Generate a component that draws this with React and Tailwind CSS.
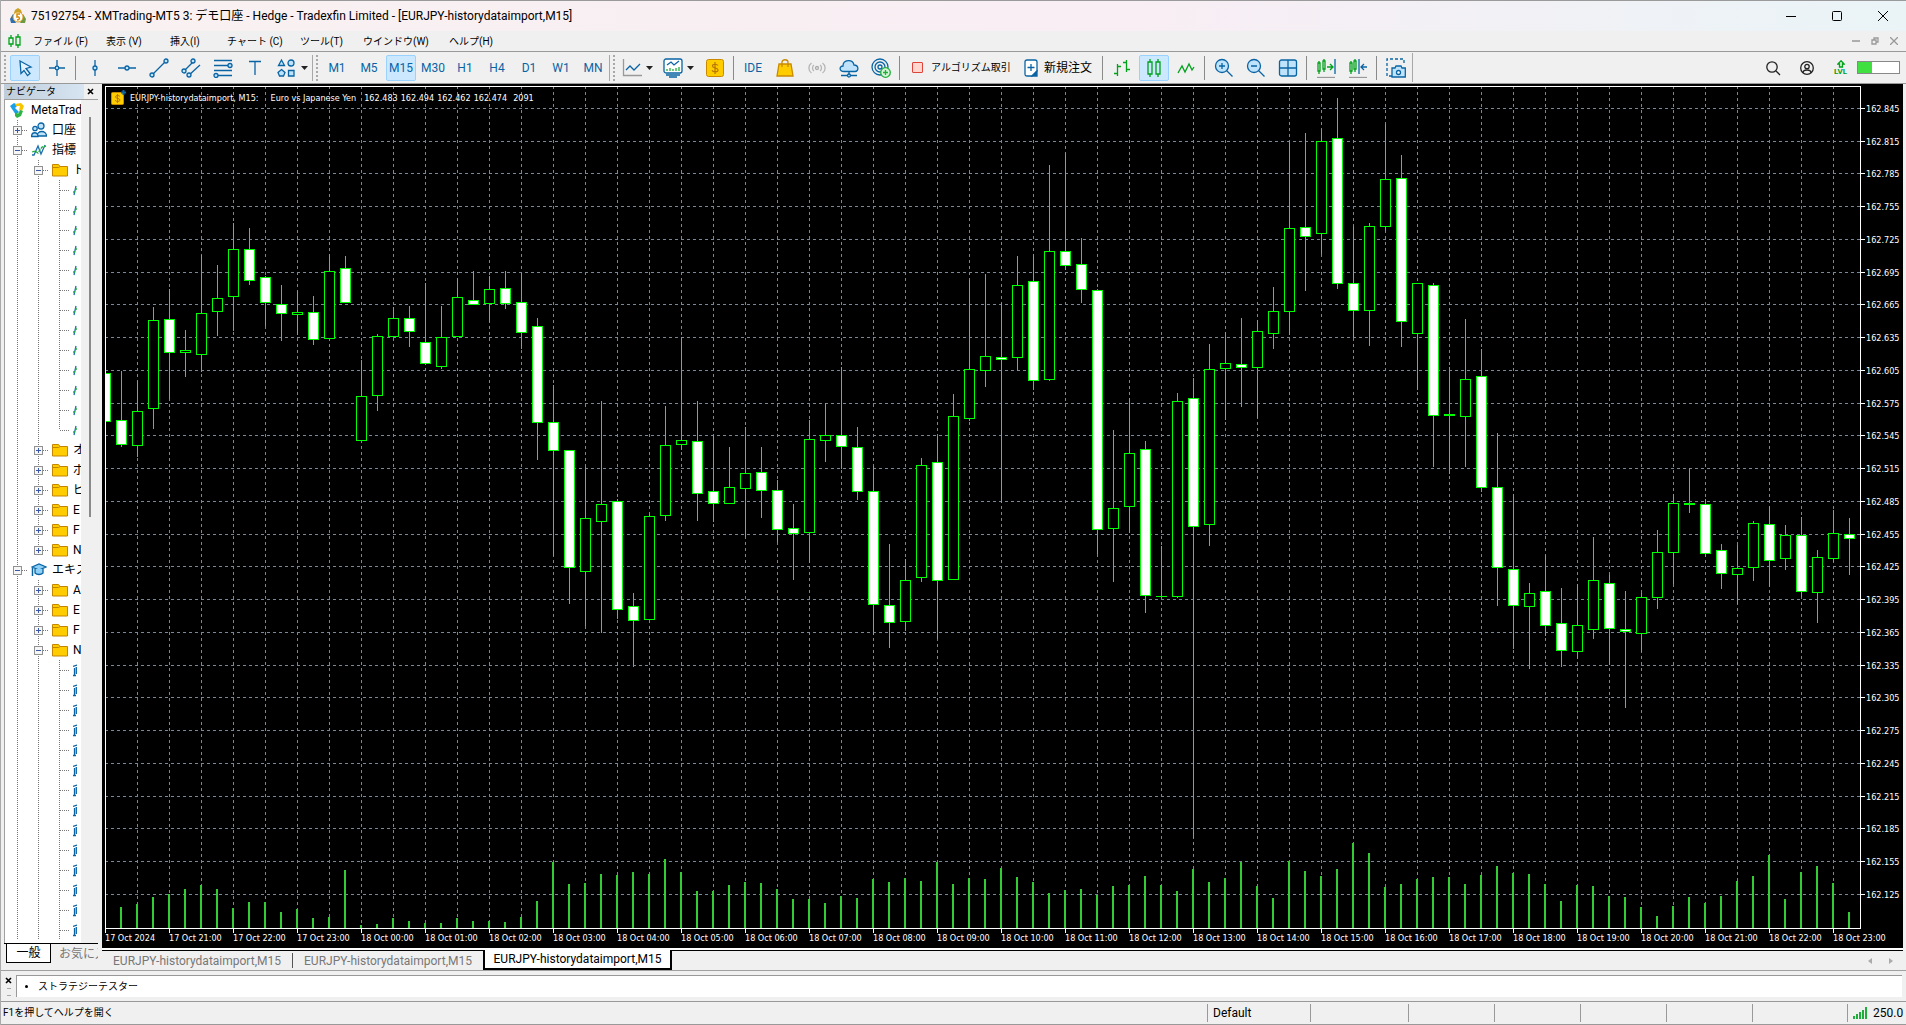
import { useState } from "react";

const BAR_STEP = 16;
const PLOT_TOP = 86;
const PLOT_BOTTOM = 928;

// [high, body top, body bottom, low, bearish] per 15 minute bar, y in window pixels
const CANDLES = [
  [373, 373, 421, 421, 1], [371, 420, 444, 446, 1], [381, 411, 445, 456, 0], [307, 320, 408, 428, 0],
  [289, 319, 352, 398, 1], [330, 350, 352, 376, 0], [255, 313, 354, 371, 0], [265, 298, 311, 335, 0],
  [223, 249, 296, 330, 0], [228, 249, 280, 284, 1], [276, 277, 302, 325, 1], [285, 304, 313, 340, 1],
  [291, 312, 314, 334, 0], [296, 312, 339, 344, 1], [254, 271, 338, 338, 0], [256, 268, 302, 302, 1],
  [360, 396, 440, 440, 0], [334, 336, 395, 410, 0], [307, 318, 336, 336, 0], [306, 318, 331, 346, 1],
  [283, 342, 363, 364, 1], [306, 337, 366, 368, 0], [278, 297, 336, 336, 0], [271, 300, 304, 304, 1],
  [276, 289, 303, 321, 0], [271, 288, 303, 308, 1], [273, 302, 332, 348, 1], [318, 326, 422, 459, 1],
  [385, 422, 450, 555, 1], [450, 450, 567, 603, 1], [467, 518, 571, 625, 0], [401, 504, 521, 632, 0],
  [499, 501, 609, 618, 1], [593, 606, 620, 666, 1], [514, 516, 619, 619, 0], [406, 445, 515, 520, 0],
  [337, 440, 444, 449, 0], [401, 441, 493, 520, 1], [435, 491, 503, 521, 1], [447, 487, 503, 503, 0],
  [427, 473, 488, 536, 0], [447, 472, 490, 517, 1], [480, 490, 529, 541, 1], [504, 528, 533, 579, 1],
  [420, 439, 532, 562, 0], [403, 435, 440, 461, 0], [367, 435, 446, 468, 1], [427, 447, 491, 499, 1],
  [466, 491, 604, 634, 1], [544, 605, 622, 647, 1], [559, 580, 621, 630, 0], [458, 465, 577, 581, 0],
  [436, 462, 580, 638, 1], [394, 416, 579, 579, 0], [280, 369, 418, 420, 0], [274, 356, 370, 386, 0],
  [303, 357, 359, 502, 1], [256, 285, 357, 370, 0], [254, 281, 380, 389, 1], [165, 251, 379, 380, 0],
  [153, 251, 265, 269, 1], [238, 264, 289, 302, 1], [289, 290, 529, 553, 1], [430, 508, 528, 581, 0],
  [398, 453, 506, 532, 0], [441, 449, 595, 612, 1], [546, 596, 596, 597, 0], [393, 401, 596, 597, 0],
  [378, 398, 526, 837, 1], [344, 369, 524, 545, 0], [332, 363, 368, 419, 0], [318, 364, 367, 406, 1],
  [320, 331, 367, 417, 0], [287, 311, 333, 348, 0], [142, 228, 311, 334, 0], [133, 227, 236, 290, 1],
  [129, 141, 233, 253, 0], [98, 138, 283, 288, 1], [226, 283, 310, 337, 1], [223, 226, 310, 345, 0],
  [124, 179, 226, 230, 0], [155, 178, 321, 346, 1], [283, 283, 333, 389, 0], [283, 285, 415, 466, 1],
  [367, 414, 415, 473, 1], [319, 379, 416, 466, 0], [349, 376, 487, 491, 1], [433, 487, 567, 605, 1],
  [494, 569, 605, 648, 1], [583, 593, 606, 668, 0], [555, 591, 625, 635, 1], [588, 623, 650, 666, 1],
  [584, 625, 651, 658, 0], [537, 580, 629, 638, 0], [575, 583, 628, 664, 1], [591, 629, 631, 707, 1],
  [593, 597, 633, 651, 0], [530, 552, 597, 608, 0], [494, 503, 552, 583, 0], [468, 503, 504, 512, 1],
  [499, 504, 553, 556, 1], [544, 550, 573, 588, 1], [545, 568, 574, 603, 0], [521, 523, 567, 580, 0],
  [506, 524, 560, 586, 1], [525, 535, 558, 569, 0], [517, 535, 591, 596, 1], [550, 557, 592, 622, 0],
  [510, 533, 558, 561, 0], [518, 534, 538, 574, 1],
];

// top of each volume bar, first bar of the window has none
const VOLUMES = [
  928, 907, 904, 897, 894, 889, 885, 889, 908, 902, 902, 912, 909, 918, 917, 870, 925, 924, 918, 921,
  923, 923, 918, 921, 921, 922, 917, 901, 862, 884, 883, 874, 875, 872, 874, 859, 872, 891, 891, 885,
  882, 883, 889, 899, 899, 903, 896, 898, 879, 882, 878, 881, 862, 884, 878, 879, 868, 877, 882, 893,
  890, 889, 895, 886, 885, 876, 885, 891, 869, 882, 878, 862, 886, 898, 861, 871, 876, 869, 843, 853,
  887, 884, 879, 877, 877, 884, 875, 866, 873, 874, 884, 901, 885, 886, 896, 897, 907, 916, 906, 897,
  903, 896, 881, 876, 855, 899, 872, 866, 883, 912,
];

const PRICES = Array.from({ length: 25 }, (_, i) => ({
  label: (162.845 - i * 0.03).toFixed(3),
  y: Math.round(107.9 + i * 32.75) - PLOT_TOP,
}));

const HOURS = [
  "17 Oct 2024", "17 Oct 21:00", "17 Oct 22:00", "17 Oct 23:00",
  ...Array.from({ length: 24 }, (_, i) => `18 Oct ${String(i).padStart(2, "0")}:00`),
];

const QUOTE = ["162.483", "162.494", "162.462", "162.474"];

const MENUS = [
  ["ファイル (F)", "w-[73px]"],
  ["表示 (V)", "w-16"],
  ["挿入(I)", "w-[57px]"],
  ["チャート (C)", "w-[73px]"],
  ["ツール(T)", "w-[63px]"],
  ["ウインドウ(W)", "w-[86px]"],
  ["ヘルプ(H)", "w-16"],
];

const TIMEFRAMES = ["M1", "M5", "M15", "M30", "H1", "H4", "D1", "W1", "MN"];

const TREE = [
  { cells: ["plus"], icon: "accounts", label: "口座" },
  { cells: ["minus"], icon: "indicator", label: "指標" },
  { cells: ["line", "minus"], icon: "folder", label: "ト" },
  ...Array.from({ length: 12 }, () => ({ cells: ["line", "line", "leaf"], icon: "indicator" })),
  { cells: ["line", "line", "end"], icon: "indicator" },
  { cells: ["line", "plus"], icon: "folder", label: "オ" },
  { cells: ["line", "plus"], icon: "folder", label: "ボ" },
  { cells: ["line", "plus"], icon: "folder", label: "ビ" },
  { cells: ["line", "plus"], icon: "folder", label: "E" },
  { cells: ["line", "plus"], icon: "folder", label: "F" },
  { cells: ["line", "plusEnd"], icon: "folder", label: "N" },
  { cells: ["minus"], icon: "expert", label: "エキス" },
  { cells: ["line", "plus"], icon: "folder", label: "A" },
  { cells: ["line", "plus"], icon: "folder", label: "E" },
  { cells: ["line", "plus"], icon: "folder", label: "F" },
  { cells: ["line", "minus"], icon: "folder", label: "N" },
  ...Array.from({ length: 14 }, () => ({ cells: ["line", "line", "leaf"], icon: "expert" })),
];

function Svg({ w = 20, h = 20, className = "", children }) {
  return (
    <svg
      width={w}
      height={h}
      viewBox={`0 0 ${w} ${h}`}
      fill="none"
      stroke="#0a64a4"
      strokeWidth="1.3"
      className={`shrink-0 ${className}`}
      aria-hidden="true"
    >
      {children}
    </svg>
  );
}

function AppLogo() {
  return (
    <Svg w={18} h={18}>
      <path d="M9 1l3 2 2 4 3 5-1 4H2l-1-4 3-5 2-4z" fill="#e8edf2" stroke="none" />
      <path d="M6 3l3-2 3 2 1 3H5z" fill="#c9a227" stroke="none" />
      <path d="M1 12l3-5 1 5 2 4H2z" fill="#2f6fb3" stroke="none" />
      <path d="M17 12l-3-5-1 5-2 4h5z" fill="#6f9a45" stroke="none" />
      <circle cx="9" cy="10" r="5" fill="#fff" stroke="#d99b1c" strokeWidth="1" />
      <path d="M11 7H8v3c3-1 3.500 3 0 3" stroke="#d98a00" strokeWidth="1.500" />
    </Svg>
  );
}

function DollarIcon({ size = 18 }) {
  return (
    <svg width={size} height={size} viewBox="0 0 18 18" fill="none" className="shrink-0" aria-hidden="true">
      <rect x="0.5" y="0.5" width="17" height="17" rx="2" fill="#ffcc00" stroke="#c98a00" />
      <path d="M12 6.500C11 5 6.500 4.500 6.500 7c0 2.300 5.500 1.500 5.500 4 0 2.400-5 2.400-6 .2M9 3v12" stroke="#b87700" strokeWidth="1.200" />
    </svg>
  );
}

function SymbolIcon() {
  return (
    <Svg w={15} h={16}>
      <rect x="0.5" y="2.500" width="12" height="12" rx="1" fill="#ffcc00" stroke="#c98a00" strokeWidth="1" />
      <path d="M9 6.500C8 5 4.500 5 4.500 7c0 1.800 4.500 1 4.500 3 0 2-4 2-5 .2M6.500 4v9" stroke="#b87700" strokeWidth="1" />
      <path d="M12.500 0v5M10 2.500h5" stroke="#0a64a4" strokeWidth="2" />
    </Svg>
  );
}

const TREE_ICONS = {
  accounts: (
    <Svg w={16} h={16}>
      <circle cx="10" cy="4" r="3" fill="#bfe3fb" />
      <path d="M6 14c0-6 9.500-6 9.500 0z" fill="#bfe3fb" />
      <circle cx="4" cy="6.500" r="2.200" fill="#bfe3fb" />
      <path d="M.6 14.500c0-5 6.500-5 6.500 0z" fill="#bfe3fb" />
    </Svg>
  ),
  indicator: (
    <Svg w={16} h={16}>
      <path d="M1 13h2l4-9 3 8 4-9" stroke="#1d6fb0" />
      <path d="M1 10l3-1 3 2 4-6 4-1" stroke="#1fae3b" strokeDasharray="3 1" />
    </Svg>
  ),
  indicatorLeaf: (
    <Svg w={4} h={16}>
      <path d="M1 13l2-9" stroke="#1d6fb0" />
      <path d="M0 10h2M2 7h2" stroke="#1fae3b" />
    </Svg>
  ),
  expert: (
    <Svg w={16} h={16}>
      <path d="M1 5l7-3 7 3-7 3z" fill="#8fd0f7" />
      <path d="M4 7v4c2 2 6 2 8 0V7" fill="#8fd0f7" />
      <path d="M1.500 6v8" strokeWidth="1.500" />
    </Svg>
  ),
  expertLeaf: (
    <Svg w={4} h={16}>
      <path d="M0 4.500L4 3M3.300 5v7M1.500 6v8M0 13.500h3" />
    </Svg>
  ),
  folder: (
    <Svg w={16} h={16}>
      <path d="M.5 2.500h6l1.500 2h7.500v9.500H.5z" fill="#ffcc00" stroke="#c48600" strokeWidth="1" />
      <path d="M.5 5.500h6l1.500-1" stroke="#c48600" strokeWidth="1" />
    </Svg>
  ),
};

function TreeCell({ type }) {
  const boxed = type === "plus" || type === "minus" || type === "plusEnd";
  const ends = type === "end" || type === "plusEnd";
  return (
    <svg width="21" height="20" viewBox="0 0 21 20" shapeRendering="crispEdges" className="shrink-0" aria-hidden="true">
      <path d={ends ? "M10.500 0v10" : "M10.500 0v20"} stroke="#777" strokeDasharray="1 1" />
      {type !== "line" && <path d="M11 10.500h10" stroke="#777" strokeDasharray="1 1" />}
      {boxed && (
        <>
          <rect x="6.500" y="6.500" width="8" height="8" fill="#f6f6f6" stroke="#919191" />
          <path d="M8 10.500h5" stroke="#3a58a8" />
          {type !== "minus" && <path d="M10.500 8v5" stroke="#3a58a8" />}
        </>
      )}
    </svg>
  );
}

function Navigator() {
  return (
    <aside className="flex w-[101px] shrink-0 flex-col bg-[#f0f0f0] pr-1 pl-[3px]">
      <header className="flex h-[15px] items-center justify-between pr-1">
        <h2 className="w-20 overflow-hidden bg-gradient-to-r from-[#bfcddb] to-[#d7e4f2] pl-0.5 text-[10px] leading-[15px] whitespace-nowrap">
          ナビゲータ
        </h2>
        <button aria-label="ナビゲータを閉じる">
          <Svg w={7} h={7}>
            <path d="M1 1l5 5M6 1L1 6" stroke="#000" strokeWidth="1.600" />
          </Svg>
        </button>
      </header>
      <div className="flex min-h-0 flex-1 overflow-hidden border-t border-l border-[#a0a0a0]">
        <ul className="w-19 overflow-hidden bg-white text-xs">
          <li className="flex h-5 items-center whitespace-nowrap">
            <Svg w={16} h={16} className="ml-1">
              <path d="M1 4l4-3 4 2-3 3 4 4-3 3z" fill="#1ba0e8" stroke="none" />
              <path d="M6 2l6-1 3 3-2 5-3-1 1-4H7z" fill="#f7c400" stroke="none" />
              <path d="M6 10l3 2 2-4 3 1-2 5-4 2-2-2z" fill="#2fb344" stroke="none" />
            </Svg>
            <span className="ml-1.5">MetaTrad</span>
          </li>
          {TREE.map((row, i) => (
            <li key={i} className="flex h-5 items-center overflow-hidden pl-0.5 whitespace-nowrap">
              {row.cells.map((type, c) => (
                <TreeCell key={c} type={type} />
              ))}
              <span className="ml-[3px]">{TREE_ICONS[row.label ? row.icon : `${row.icon}Leaf`]}</span>
              {row.label && <span className="ml-[5px]">{row.label}</span>}
            </li>
          ))}
        </ul>
        <div className="flex flex-1 justify-center pt-[17px]">
          <div className="h-[400px] w-0.5 bg-[#8a8a8a]" />
        </div>
      </div>
      <div className="flex h-[27px] shrink-0 items-start overflow-hidden border-t border-black pl-0.5 text-xs whitespace-nowrap">
        <button className="-mt-px h-5 w-[45px] shrink-0 border border-t-0 border-black bg-white">一般</button>
        <button className="ml-2 h-5 text-[#777]">お気に入り</button>
      </div>
    </aside>
  );
}

function Plot() {
  return (
    <svg width="100%" height="100%" shapeRendering="crispEdges" role="img" aria-label="EURJPY M15">
      <g stroke="#778899" strokeDasharray="3 3">
        {PRICES.map((p) => (
          <line key={p.label} x1="0" x2="100%" y1={p.y + 0.5} y2={p.y + 0.5} />
        ))}
        {Array.from({ length: 54 }, (_, i) => (
          <line key={i} x1={32 + i * 32 + 0.5} x2={32 + i * 32 + 0.5} y1="0" y2="100%" />
        ))}
      </g>
      <g transform={`translate(0 ${-PLOT_TOP})`}>
        {VOLUMES.map((top, i) => (
          <rect key={i} x={i * BAR_STEP - 1} y={top} width="2" height={PLOT_BOTTOM - top} fill="#32cd32" />
        ))}
        {CANDLES.map(([high, top, bottom, low, bearish], i) => (
          <g key={i}>
            <rect x={i * BAR_STEP} y={high} width="1" height={low - high + 1} fill="#00ff00" />
            <rect x={i * BAR_STEP - 5} y={top} width="11" height={bottom - top + 1} fill="#00ff00" />
            {bottom - top > 1 && (
              <rect
                x={i * BAR_STEP - 4}
                y={top + 1}
                width="9"
                height={bottom - top - 1}
                fill={bearish ? "#ffffff" : "#000000"}
              />
            )}
          </g>
        ))}
      </g>
      <path d="M.5 0v2000M0 .5h4000" stroke="#fff" />
    </svg>
  );
}

function Chart() {
  return (
    <div className="relative grid min-h-0 flex-1 grid-cols-[1fr_43px] grid-rows-[1fr_20px] bg-black pt-0.5 pl-[3px] font-['DejaVu_Sans_Condensed','DejaVu_Sans',sans-serif] text-[9px] text-white">
      <div className="min-w-0 overflow-hidden">
        <Plot />
      </div>
      <svg width="43" height="100%" shapeRendering="crispEdges" fill="#fff">
        <path d="M.5 0v2000" stroke="#fff" />
        {PRICES.map((p) => (
          <g key={p.label}>
            <rect x="0" y={p.y} width="5" height="1" />
            <text x="6" y={p.y + 4}>{p.label}</text>
          </g>
        ))}
      </svg>
      <svg width="100%" height="20" shapeRendering="crispEdges" fill="#fff" className="col-span-2">
        <rect x="0" y="0" width={1756} height="1" />
        {HOURS.map((label, i) => (
          <g key={label}>
            <rect x={i * 64} y="0" width="1" height="5" />
            <text x={i * 64} y="13">{label}</text>
          </g>
        ))}
      </svg>
      <div className="absolute top-1.5 left-[9px] flex items-center whitespace-nowrap">
        <SymbolIcon />
        <span className="mt-px ml-1">EURJPY-historydataimport, M15:</span>
        <span className="mt-px ml-3">Euro vs Japanese Yen</span>
        <span className="mt-px ml-2 flex gap-[3px]">
          {QUOTE.map((price) => (
            <span key={price}>{price}</span>
          ))}
        </span>
        <span className="mt-px ml-1.5">2091</span>
      </div>
    </div>
  );
}

function ChartTabs() {
  return (
    <nav className="flex h-[22px] shrink-0 items-start border-t-2 border-white text-xs whitespace-nowrap text-[#777]">
      <div className="flex h-5 flex-1 border-t border-black">
        <button className="my-0.5 w-[191px] border-r border-[#555] text-center">EURJPY-historydataimport,M15</button>
        <button className="w-[190px] text-center">EURJPY-historydataimport,M15</button>
        <button className="-mt-px h-5 w-[189px] border-2 border-t-0 border-black bg-white text-center text-black">
          EURJPY-historydataimport,M15
        </button>
        <span className="ml-auto flex items-center gap-[17px] pr-2.5">
          <button aria-label="前のタブ">
            <Svg w={4} h={6}>
              <path d="M4 0v6L0 3z" fill="#aaa" stroke="none" />
            </Svg>
          </button>
          <button aria-label="次のタブ">
            <Svg w={4} h={6}>
              <path d="M0 0v6l4-3z" fill="#aaa" stroke="none" />
            </Svg>
          </button>
        </span>
      </div>
    </nav>
  );
}

function Handle() {
  return (
    <span className="flex w-2 items-center justify-center">
      <span className="h-[26px] border-l-2 border-dotted border-[#a8a8a8]" />
    </span>
  );
}

function Separator() {
  return (
    <span className="flex w-1.5 items-center pl-0.5">
      <span className="h-6 w-px bg-[#8a8a8a]" />
    </span>
  );
}

function Tool({ label, active, children }) {
  return (
    <button
      aria-label={label}
      aria-pressed={active}
      className={`mx-px grid h-[26px] w-[30px] place-items-center rounded-[2px] border ${
        active ? "border-[#99d1ff] bg-[#cce8ff]" : "border-transparent"
      }`}
    >
      {children}
    </button>
  );
}

function Caret() {
  return (
    <Svg w={7} h={4}>
      <path d="M0 0h7L3.500 4z" fill="#222" stroke="none" />
    </Svg>
  );
}

function DrawingTools() {
  return (
    <>
      <Handle />
      <Tool label="カーソル" active>
        <Svg>
          <path d="M5 3l11 6-5 1.500 4 5-2.500 2-3.500-5-3 3z" fill="#e6f4ff" />
        </Svg>
      </Tool>
      <Tool label="十字カーソル">
        <Svg>
          <path d="M10 2v6M10 12v6M2 10h6M12 10h6" />
          <circle cx="10" cy="10" r="1.800" fill="#bfe3fb" />
        </Svg>
      </Tool>
      <Separator />
      <Tool label="垂直線">
        <Svg>
          <path d="M10 2v6M10 12v6" />
          <circle cx="10" cy="10" r="2" fill="#bfe3fb" />
        </Svg>
      </Tool>
      <Tool label="水平線">
        <Svg>
          <path d="M1 10h7M12 10h7" />
          <circle cx="10" cy="10" r="2" fill="#bfe3fb" />
        </Svg>
      </Tool>
      <Tool label="トレンドライン">
        <Svg>
          <path d="M4 16L16 4" />
          <circle cx="3" cy="17" r="2" fill="#bfe3fb" />
          <circle cx="17" cy="3" r="2" fill="#bfe3fb" />
        </Svg>
      </Tool>
      <Tool label="チャネル">
        <Svg>
          <path d="M4 12l8-8M7 18L19 7" />
          <circle cx="3" cy="13" r="2" fill="#bfe3fb" />
          <circle cx="12" cy="3" r="2" fill="#bfe3fb" />
          <circle cx="8" cy="17" r="2" fill="#bfe3fb" />
        </Svg>
      </Tool>
      <Tool label="フィボナッチ">
        <Svg>
          <path d="M1 2.500h18M1 7.500h14M1 12.500h18M5 17.500h14" />
          <circle cx="17" cy="7.500" r="2" fill="#bfe3fb" />
          <circle cx="3" cy="17.500" r="2" fill="#bfe3fb" />
        </Svg>
      </Tool>
      <Tool label="テキスト">
        <Svg>
          <path d="M4 3.500h12M10 3.500V17" />
        </Svg>
      </Tool>
      <button aria-label="図形" className="flex w-[41px] items-center gap-1 pl-1.5">
        <Svg>
          <path d="M1.500 7.500L4.500 2l3 5.500zM4.500 11.500l3.500 3-1.500 3.500h-4L1 14.500z" fill="#bfe3fb" />
          <circle cx="14" cy="5" r="3" fill="#bfe3fb" />
          <path d="M11.500 12.500h5.500v5.500h-5.500z" fill="#bfe3fb" />
        </Svg>
        <Caret />
      </button>
    </>
  );
}

function TimeframeTools({ value, onChange }) {
  return (
    <div className="flex items-center border-x border-[#a8a8a8] text-xs text-[#0a64a4]">
      <Handle />
      {TIMEFRAMES.map((tf) => (
        <button
          key={tf}
          onClick={() => onChange(tf)}
          className={`mx-px h-[26px] w-[30px] rounded-[2px] border text-center ${
            tf === value ? "border-[#99d1ff] bg-[#cce8ff]" : "border-transparent"
          }`}
        >
          {tf}
        </button>
      ))}
    </div>
  );
}

function ChartTools() {
  return (
    <>
      <Handle />
      <button aria-label="ライン" className="flex w-[41px] items-center gap-1 pl-1">
        <Svg>
          <path d="M1.500 1v16.500H20" stroke="#999" />
          <path d="M4 12l4-4 4 4 6-6" />
        </Svg>
        <Caret />
      </button>
      <button aria-label="インディケータ" className="flex w-10 items-center gap-1 pl-1">
        <Svg>
          <rect x="1" y="1" width="18" height="14" rx="2" fill="#fff" />
          <path d="M4 7l4-3 3 3 5-4" />
          <path d="M4 13v-2M7 13v-3M10 13v-2M13 13v-3M16 13v-4" stroke="#1fae3b" />
          <path d="M3 17h14M6 19h8" />
        </Svg>
        <Caret />
      </button>
      <Tool label="取引"><DollarIcon /></Tool>
      <Separator />
      <Tool label="IDE"><span className="text-xs text-[#0a64a4]">IDE</span></Tool>
      <Tool label="マーケット">
        <Svg>
          <path d="M4 6h12l2 12H2z" fill="#ffcc00" stroke="#c98a00" />
          <path d="M7 9V4c0-3 6-3 6 0v5" stroke="#c98a00" />
        </Svg>
      </Tool>
      <Tool label="シグナル">
        <Svg>
          <circle cx="10" cy="10" r="1.500" stroke="#aaa" />
          <path d="M7 7c-2 1.500-2 4.500 0 6M13 7c2 1.500 2 4.500 0 6M4.500 5c-3.500 2.500-3.500 7.500 0 10M15.500 5c3.500 2.500 3.500 7.500 0 10" stroke="#b5b5b5" />
        </Svg>
      </Tool>
      <Tool label="VPS">
        <Svg>
          <path d="M5 13.500c-5 0-5-5.500-1-5.500 0-7 10-7 11-1 5 0 5 6.500 1 6.500z" fill="#bfe3fb" />
          <path d="M10 13.500v3M2 17.500h6M12 17.500h6" />
          <circle cx="10" cy="17.500" r="1.500" fill="#bfe3fb" />
        </Svg>
      </Tool>
      <Tool label="コミュニティ">
        <Svg>
          <circle cx="9" cy="9" r="8" />
          <circle cx="9" cy="9" r="5" />
          <circle cx="9" cy="9" r="2" />
          <circle cx="14.500" cy="14.500" r="4.800" fill="#d6f5d6" stroke="#1fae3b" />
          <path d="M14.500 12v5M12 14.500h5" stroke="#1fae3b" />
        </Svg>
      </Tool>
      <Separator />
      <button className="flex w-[115px] items-center gap-2 pl-[9px] text-[10px]">
        <span className="size-[11px] shrink-0 rounded-[1px] border border-[#e0433a] bg-[#ffd6d0]" />
        アルゴリズム取引
      </button>
      <button className="flex w-[82px] items-center gap-1.5 pl-1.5 text-xs">
        <Svg w={14} h={18}>
          <path d="M1 3q0-2 2-2h8q2 0 2 2v9l-5 5H3q-2 0-2-2z" fill="#fff" />
          <path d="M13 12v5H8z" fill="#0a64a4" />
          <path d="M7 5v7M3.500 8.500h7" />
        </Svg>
        新規注文
      </button>
      <Separator />
      <Tool label="バーチャート">
        <Svg>
          <path d="M5.500 6v12M2 15.500h3.500M5.500 8.500H9M14.500 2v12M11 4.500h3.500M14.500 11.500H18" stroke="#00a11b" />
        </Svg>
      </Tool>
      <Tool label="ローソク足" active>
        <Svg>
          <path d="M6 1v3M6 16v3M14 1v3M14 16v3" stroke="#00a11b" />
          <path d="M4 4h4v12H4zM12 4h4v12h-4z" stroke="#00a11b" />
        </Svg>
      </Tool>
      <Tool label="ラインチャート">
        <Svg>
          <path d="M2 15l4-7 3 6 4-8 3 6 2-3" stroke="#00a11b" />
        </Svg>
      </Tool>
      <Separator />
      <Tool label="拡大">
        <Svg>
          <circle cx="8" cy="8" r="6.500" fill="#bfe3fb" />
          <path d="M12.500 12.500l6 6M8 5v6M5 8h6" />
        </Svg>
      </Tool>
      <Tool label="縮小">
        <Svg>
          <circle cx="8" cy="8" r="6.500" fill="#bfe3fb" />
          <path d="M12.500 12.500l6 6M5 8h6" />
        </Svg>
      </Tool>
      <Tool label="タイル表示">
        <Svg>
          <rect x="1.500" y="2" width="17" height="16" rx="2" fill="#bfe3fb" />
          <path d="M10 2v16M1.500 10h17" />
        </Svg>
      </Tool>
      <Separator />
      <Tool label="自動スクロール">
        <Svg>
          <path d="M2 5h2v8H2zM3 3v2M3 13v3M7 3h2v8H7zM8 1v2M8 11v3M11 9h6M14 6l3 3-3 3" stroke="#00a11b" />
          <path d="M19 1v15" />
          <path d="M1 19.500h18" stroke="#999" />
        </Svg>
      </Tool>
      <Tool label="チャートシフト">
        <Svg>
          <path d="M2 5h2v8H2zM3 3v2M3 13v3M6 3h2v8H6zM7 1v2M7 11v3" stroke="#00a11b" />
          <path d="M11 1v15M13 9h6M16 6l-3 3 3 3" />
          <path d="M1 19.500h18" stroke="#999" />
        </Svg>
      </Tool>
      <Separator />
      <Tool label="スクリーンショット">
        <Svg>
          <path d="M6 18H1V1h17v6" strokeDasharray="3 2" />
          <path d="M6 10h3l1-2h5l1 2h3.300v9H6z" fill="#bfe3fb" />
          <circle cx="12.500" cy="14.500" r="2" fill="#fff" />
        </Svg>
      </Tool>
      <span className="h-[29px] w-px bg-[#a8a8a8]" />
    </>
  );
}

function Toolbar() {
  const [timeframe, setTimeframe] = useState("M15");
  return (
    <div className="flex h-[33px] shrink-0 items-center border-y border-[#999] bg-[#f0f0f0] whitespace-nowrap">
      <DrawingTools />
      <TimeframeTools value={timeframe} onChange={setTimeframe} />
      <ChartTools />
      <div className="ml-auto flex items-center pr-1.5">
        <button aria-label="検索" className="grid w-[34px] place-items-center">
          <Svg w={16} h={16}>
            <circle cx="7" cy="7" r="5.200" stroke="#222" />
            <path d="M11 11l4 4" stroke="#222" />
          </Svg>
        </button>
        <button aria-label="アカウント" className="grid w-[34px] place-items-center">
          <Svg w={16} h={16}>
            <circle cx="8" cy="8" r="6.300" stroke="#222" />
            <circle cx="8" cy="6.500" r="2.200" stroke="#222" />
            <path d="M4 13c0-4 8-4 8 0" stroke="#222" />
          </Svg>
        </button>
        <button className="flex w-[33px] flex-col items-center text-[8px] leading-[8px] font-bold text-[#00a11b]">
          <Svg w={8} h={8}>
            <path d="M4 .8L7.200 4H5.500v3h-3V4H.8z" stroke="#00a11b" fill="#d6f5d6" />
          </Svg>
          LVL
        </button>
        <div className="h-[13px] w-[43px] border border-[#888] bg-white">
          <div className="h-full w-3.5 bg-[#41e041]" />
        </div>
      </div>
    </div>
  );
}

function TitleBar() {
  return (
    <header className="flex h-[31px] shrink-0 items-center border-t border-[#9a9a9a] bg-gradient-to-r from-[#f9f1f1] via-[#f8eef4] via-60% to-[#eaf4f7] pl-2">
      <AppLogo />
      <h1 className="ml-1 text-xs whitespace-nowrap">
        75192754 - XMTrading-MT5 3: デモ口座 - Hedge - Tradexfin Limited - [EURJPY-historydataimport,M15]
      </h1>
      <div className="ml-auto flex">
        <button aria-label="最小化" className="grid w-[46px] place-items-center">
          <Svg w={10} h={10}><path d="M0 5.500h10" stroke="#000" strokeWidth="1" /></Svg>
        </button>
        <button aria-label="最大化" className="grid w-[46px] place-items-center">
          <Svg w={10} h={10}><rect x="0.500" y="0.500" width="9" height="9" rx="1" stroke="#000" strokeWidth="1" /></Svg>
        </button>
        <button aria-label="閉じる" className="grid w-[46px] place-items-center">
          <Svg w={10} h={10}><path d="M0 0l10 10M10 0L0 10" stroke="#000" strokeWidth="1" /></Svg>
        </button>
      </div>
    </header>
  );
}

function MenuBar() {
  return (
    <nav className="flex h-5 shrink-0 items-center bg-[#f0f0f0] pl-[7px] text-[10px]">
      <Svg w={13} h={14}>
        <path d="M3 1v3M3 10v3M10 0v3M10 11v3" stroke="#00a11b" />
        <path d="M1 4h4v6H1zM8 3h4v8H8z" stroke="#00a11b" />
      </Svg>
      <div className="ml-3 flex">
        {MENUS.map(([label, width]) => (
          <button key={label} className={`${width} text-left whitespace-nowrap`}>{label}</button>
        ))}
      </div>
      <div className="ml-auto flex items-center gap-[11px] pr-2">
        <button aria-label="チャートを最小化">
          <Svg w={8} h={8}><path d="M0 4h8" stroke="#999" strokeWidth="1.500" /></Svg>
        </button>
        <button aria-label="チャートを元に戻す">
          <Svg w={8} h={8}><path d="M1 3h4v4H1zM3 3V1h4v4H5" stroke="#999" /></Svg>
        </button>
        <button aria-label="チャートを閉じる">
          <Svg w={8} h={8}><path d="M0 0l8 8M8 0L0 8" stroke="#999" /></Svg>
        </button>
      </div>
    </nav>
  );
}

function TesterBar() {
  return (
    <div className="flex h-[31px] shrink-0 border-t border-[#a0a0a0] pt-1 pr-1 pb-1">
      <div className="flex w-[15px] flex-col items-center gap-1 pt-0.5">
        <button aria-label="ストラテジーテスターを閉じる">
          <Svg w={7} h={7}><path d="M1 1l5 5M6 1L1 6" stroke="#000" strokeWidth="1.600" /></Svg>
        </button>
        <span className="h-2 w-1 border-y border-[#a8a8a8]" />
      </div>
      <div className="flex flex-1 items-center gap-2.5 border-t border-l border-[#999] bg-white pl-2 text-[10px]">
        <span className="size-[3px] rounded-full bg-black" />
        ストラテジーテスター
      </div>
    </div>
  );
}

function StatusBar() {
  return (
    <footer className="flex h-6 shrink-0 items-stretch border-t border-b border-[#999] bg-[#f0f0f0] pl-0.5 text-[10px] leading-[22px] whitespace-nowrap">
      <span className="flex-1">F1を押してヘルプを開く</span>
      <span className="my-0.5 w-[103px] border-l border-[#999] pl-[5px] text-xs leading-[18px]">Default</span>
      <span className="my-0.5 w-[98px] border-l border-[#999]" />
      <span className="my-0.5 w-[86px] border-l border-[#999]" />
      <span className="my-0.5 w-[86px] border-l border-[#999]" />
      <span className="my-0.5 w-[86px] border-l border-[#999]" />
      <span className="my-0.5 w-[86px] border-l border-[#999]" />
      <span className="my-0.5 w-[95px] border-l border-[#999]" />
      <span className="my-0.5 flex w-[59px] items-center gap-1.5 border-l border-[#999] pl-[5px] text-xs leading-[18px]">
        <Svg w={14} h={12}>
          <path d="M1 12V9M4 12V7M7 12V5M10 12V3M13 12V0" stroke="#1fae3b" strokeWidth="2" />
        </Svg>
        250.0
      </span>
    </footer>
  );
}

export default function App() {
  return (
    <div className="flex h-screen flex-col overflow-hidden border-l border-[#aaa] bg-[#f0f0f0] font-[Roboto,'Noto_Sans_CJK_JP',sans-serif] text-black">
      <TitleBar />
      <MenuBar />
      <Toolbar />
      <div className="flex min-h-0 flex-1">
        <Navigator />
        <main className="mr-[3px] flex min-w-0 flex-1 flex-col">
          <Chart />
          <ChartTabs />
        </main>
      </div>
      <TesterBar />
      <StatusBar />
    </div>
  );
}
